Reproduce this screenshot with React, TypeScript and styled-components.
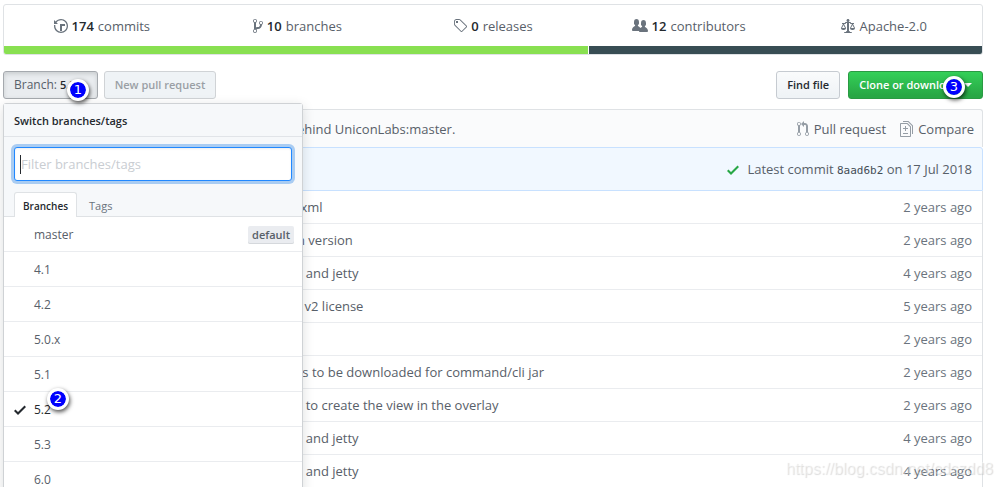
import React from "react";
import styled, { createGlobalStyle, css } from "styled-components";

const GlobalStyle = createGlobalStyle`
  *, *::before, *::after { box-sizing: border-box; }
  body {
    margin: 0;
    background: #fff;
    color: #24292e;
    font: 13px/20px "Open Sans", "Segoe UI", sans-serif;
  }
  button, input { font: inherit; }
`;

const ICONS = {
  history: { w: 14, d: "M8 13H6V6h5v2H8v5zM7 1C4.81 1 2.87 2.02 1.59 3.59L0 2v4h4L2.5 4.5C3.55 3.17 5.17 2.3 7 2.3c3.14 0 5.7 2.56 5.7 5.7s-2.56 5.7-5.7 5.7A5.71 5.71 0 0 1 1.3 8c0-.34.03-.67.09-1H.08C.03 7.33 0 7.66 0 8c0 3.86 3.14 7 7 7s7-3.14 7-7-3.14-7-7-7z" },
  branch: { w: 10, d: "M10 5c0-1.11-.89-2-2-2a1.993 1.993 0 0 0-1 3.72v.3c-.02.52-.23.98-.63 1.38-.4.4-.86.61-1.38.63-.83.02-1.48.16-2 .45V4.72a1.993 1.993 0 0 0-1-3.72C.88 1 0 1.89 0 3a2 2 0 0 0 1 1.72v6.56c-.59.35-1 .99-1 1.72 0 1.11.89 2 2 2 1.11 0 2-.89 2-2 0-.53-.2-1-.53-1.36.09-.06.48-.41.59-.47.25-.11.56-.17.94-.17 1.05-.05 1.95-.45 2.75-1.25S8.95 7.77 9 6.73h-.02C9.59 6.37 10 5.73 10 5zM2 1.8c.66 0 1.2.55 1.2 1.2 0 .65-.55 1.2-1.2 1.2C1.35 4.2.8 3.65.8 3c0-.65.55-1.2 1.2-1.2zm0 12.41c-.66 0-1.2-.55-1.2-1.2 0-.65.55-1.2 1.2-1.2.65 0 1.2.55 1.2 1.2 0 .65-.55 1.2-1.2 1.2zm6-8c-.66 0-1.2-.55-1.2-1.2 0-.65.55-1.2 1.2-1.2.65 0 1.2.55 1.2 1.2 0 .65-.55 1.2-1.2 1.2z" },
  tag: { w: 14, d: "M7.73 1.73C7.26 1.26 6.62 1 5.96 1H3.5C2.13 1 1 2.13 1 3.5v2.47c0 .66.27 1.3.73 1.77l6.06 6.06c.39.39 1.02.39 1.41 0l4.59-4.59a.996.996 0 0 0 0-1.41L7.73 1.73zM2.38 7.09c-.31-.3-.47-.7-.47-1.13V3.5c0-.88.72-1.59 1.59-1.59h2.47c.42 0 .83.16 1.13.47l6.14 6.13-4.73 4.73-6.13-6.15zM3.01 3h2v2H3V3h.01z" },
  people: { w: 16, d: "M16 12.999c0 .439-.45 1-1 1H7.995c-.539 0-.994-.447-.995-.999H1c-.54 0-1-.561-1-1 0-2.634 3-4 3-4s.229-.409 0-1c-.841-.621-1.058-.59-1-3 .058-2.419 1.367-3 2.5-3s2.442.58 2.5 3c.058 2.41-.159 2.379-1 3-.229.59 0 1 0 1s1.549.711 2.42 2.088C9.196 9.369 10 8.999 10 8.999s.229-.409 0-1c-.841-.62-1.058-.59-1-3 .058-2.419 1.367-3 2.5-3s2.437.581 2.495 3c.059 2.41-.158 2.38-1 3-.229.59 0 1 0 1s3.005 1.366 3.005 4z" },
  law: { w: 14, d: "M7 4c-.83 0-1.5-.67-1.5-1.5S6.17 1 7 1s1.5.67 1.5 1.5S7.83 4 7 4zm7 6c0 1.11-.89 2-2 2h-1c-1.11 0-2-.89-2-2l2-4h-1c-.55 0-1-.45-1-1H8v8c.42 0 1 .45 1 1h1c.42 0 1 .45 1 1H3c0-.55.58-1 1-1h1c0-.55.58-1 1-1h.03L6 5H5c0 .55-.45 1-1 1H3l2 4c0 1.11-.89 2-2 2H2c-1.11 0-2-.89-2-2l2-4H1V5h3c0-.55.45-1 1-1h4c.55 0 1 .45 1 1h3v1h-1l2 4zM2.5 7L1 10h3L2.5 7zM13 10l-1.5-3-1.5 3h3z" },
  pull: { w: 12, d: "M11 11.28V5c-.03-.78-.34-1.47-.94-2.06C9.46 2.35 8.78 2.03 8 2H7V0L4 3l3 3V4h1c.27.02.48.11.69.31.21.2.3.42.31.69v6.28A1.993 1.993 0 0 0 10 15a1.993 1.993 0 0 0 1-3.72zm-1 2.92c-.66 0-1.2-.55-1.2-1.2 0-.65.55-1.2 1.2-1.2.65 0 1.2.55 1.2 1.2 0 .65-.55 1.2-1.2 1.2zM4 3c0-1.11-.89-2-2-2a1.993 1.993 0 0 0-1 3.72v6.56A1.993 1.993 0 0 0 2 15a1.993 1.993 0 0 0 1-3.72V4.72c.59-.34 1-.98 1-1.72zm-.8 10c0 .66-.55 1.2-1.2 1.2-.65 0-1.2-.55-1.2-1.2 0-.65.55-1.2 1.2-1.2.65 0 1.2.55 1.2 1.2zM2 4.2C1.34 4.2.8 3.65.8 3c0-.65.55-1.2 1.2-1.2.65 0 1.2.55 1.2 1.2 0 .65-.55 1.2-1.2 1.2z" },
  diff: { w: 13, d: "M6 7h2v1H6v2H5V8H3V7h2V5h1v2zm-3 6h5v-1H3v1zM7.5 2L11 5.5V15c0 .55-.45 1-1 1H1c-.55 0-1-.45-1-1V3c0-.55.45-1 1-1h6.5zM10 6L7 3H1v12h9V6zM8.5 0H3v1h5l4 4v8h1V4.5L8.5 0z" },
  check: { w: 12, d: "M12 5l-8 8-4-4 1.5-1.5L4 10l6.5-6.5L12 5z" },
};

const Svg = styled.svg`
  display: block;
  flex: none;
  fill: currentColor;
`;

function Icon({ name }: { name: keyof typeof ICONS }) {
  const { w, d } = ICONS[name];
  return (
    <Svg width={w} height={16} viewBox={`0 0 ${w} 16`} aria-hidden="true">
      <path fillRule="evenodd" d={d} />
    </Svg>
  );
}

const Page = styled.main`
  position: relative;
  height: 100vh;
  overflow: hidden;
  padding: 4px 19px 0 3px;
`;

const Summary = styled.section`
  border: 1px solid #dfe2e5;
  border-radius: 3px;
  overflow: hidden;
`;

const Stats = styled.ul`
  display: flex;
  margin: 0;
  padding: 0;
  list-style: none;
`;

const Stat = styled.li`
  flex: 1;
`;

const StatLink = styled.a`
  display: flex;
  align-items: center;
  justify-content: center;
  gap: 4px;
  height: 41px;
  color: #586069;
  text-decoration: none;
  svg { color: #6a737d; }
  strong { font-weight: 600; color: #24292e; }
`;

const LanguageBar = styled.div`
  display: flex;
  gap: 1px;
  height: 8px;
`;

const Language = styled.span<{ $share: number; $color: string }>`
  flex: ${(p) => p.$share} 1 0;
  background: ${(p) => p.$color};
`;

const Toolbar = styled.div`
  display: flex;
  gap: 6px;
  margin: 16px 0 10px;
`;

const ToolbarEnd = styled.div`
  display: flex;
  gap: 8px;
  margin-left: auto;
`;

const BranchPicker = styled.div`
  position: relative;
`;

const variants = {
  plain: css`
    color: #24292e;
    border-color: #c6cbd1;
    background: linear-gradient(#fafbfc, #eff3f6 90%);
  `,
  selected: css`
    gap: 3px;
    color: #586069;
    font-size: 12px;
    font-weight: 400;
    border-color: #a5a9ae;
    background: #e9ecef;
    box-shadow: inset 0 2px 4px rgba(27, 31, 35, 0.15);
  `,
  disabled: css`
    color: #9a9fa5;
    border-color: #d0d3d6;
    background: #eff3f6;
  `,
  primary: css`
    color: #fff;
    border-color: #2a9a43;
    background: linear-gradient(#34d058, #28a745 90%);
  `,
};

const Button = styled.button<{ $variant: keyof typeof variants }>`
  display: flex;
  align-items: center;
  gap: 5px;
  height: 28px;
  padding: 0 10px;
  border: 1px solid;
  border-radius: 3px;
  font-size: 11px;
  font-weight: 600;
  line-height: 20px;
  white-space: nowrap;
  ${(p) => variants[p.$variant]}
  strong { color: #24292e; font-size: 11px; font-weight: 600; }
`;

const Caret = styled.span`
  border: 4px solid transparent;
  border-top-color: currentColor;
  border-bottom: 0;
`;

const Popup = styled.div`
  position: absolute;
  z-index: 2;
  top: 32px;
  left: 0;
  width: 300px;
  border: 1px solid #cfd2d5;
  border-radius: 3px;
  background: #fff;
  box-shadow: 0 3px 12px rgba(27, 31, 35, 0.15);
  font-size: 12px;
`;

const PopupTitle = styled.h2`
  margin: 0;
  padding: 9px 10px 7px;
  border-bottom: 1px solid #e1e4e8;
  background: #f6f8fa;
  font-size: 11px;
  font-weight: 600;
  line-height: 16px;
`;

const PopupFilters = styled.div`
  background: #f6f8fa;
`;

const FilterField = styled.div`
  padding: 10px 10px 11px;
`;

const FilterInput = styled.input`
  display: block;
  width: 100%;
  height: 34px;
  padding: 6px;
  border: 1px solid #2188ff;
  border-radius: 3px;
  outline: 0;
  background: #fff;
  color: #24292e;
  box-shadow: inset 0 1px 2px rgba(27, 31, 35, 0.08), 0 0 0 3px #a9ccf2;
  font-size: 13px;
  &::placeholder { color: #c9cdd2; }
  &:placeholder-shown {
    caret-color: transparent;
    background: linear-gradient(#24292e, #24292e) 5px center / 1px 19px no-repeat #fff;
  }
`;

const Tabs = styled.div`
  display: flex;
  height: 25px;
  padding: 0 10px;
  box-shadow: inset 0 -1px 0 #dfe2e5;
`;

const Tab = styled.button<{ $active?: boolean }>`
  height: 25px;
  padding: 2px 8px 0;
  border: 1px solid ${(p) => (p.$active ? "#dfe2e5" : "transparent")};
  border-bottom: 0;
  border-radius: 3px 3px 0 0;
  background: ${(p) => (p.$active ? "#fff" : "transparent")};
  color: ${(p) => (p.$active ? "#24292e" : "#6a737d")};
  font-size: ${(p) => (p.$active ? 10 : 11)}px;
  font-weight: ${(p) => (p.$active ? 600 : 400)};
  & + & { margin-left: 3px; }
`;

const BranchList = styled.ul`
  margin: 0;
  padding: 0;
  list-style: none;
`;

const BranchItem = styled.li`
  border-bottom: 1px solid #eaecef;
`;

const BranchLink = styled.a<{ $current?: boolean }>`
  display: grid;
  grid-template-columns: 12px 1fr auto;
  align-items: center;
  gap: 8px;
  height: 34px;
  padding: 1px 8px 0 10px;
  color: ${(p) => (p.$current ? "#24292e" : "#586069")};
  text-decoration: none;
`;

const DefaultLabel = styled.span`
  padding: 0 4px;
  border-radius: 2px;
  background: #eaecf0;
  box-shadow: inset 0 -1px 0 #d5d8dc;
  color: #586069;
  font-size: 11px;
  font-weight: 600;
  line-height: 18px;
`;

const CompareBar = styled.div`
  display: flex;
  align-items: center;
  gap: 14px;
  height: 38px;
  padding: 1px 8px 0 293px;
  border: 1px solid #dfe2e5;
  border-bottom: 0;
  border-radius: 3px 3px 0 0;
  background: #fafbfc;
  color: #586069;
`;

const CompareText = styled.span`
  flex: 1;
`;

const CompareLink = styled.a`
  display: flex;
  align-items: center;
  gap: 5px;
  color: #586069;
  text-decoration: none;
  svg { color: #959da5; }
`;

const CommitBar = styled.div`
  display: flex;
  align-items: center;
  justify-content: flex-end;
  gap: 8px;
  height: 44px;
  padding: 1px 10px 0;
  border: 1px solid #c8e1ff;
  border-radius: 3px 3px 0 0;
  background: #f1f8ff;
  color: #586069;
  svg { color: #28a745; }
`;

const Sha = styled.a`
  color: #444d56;
  font: 11px/20px "DejaVu Sans Mono", monospace;
  text-decoration: none;
`;

const FileTable = styled.table`
  width: 100%;
  border: 1px solid #dfe2e5;
  border-top: 0;
  border-spacing: 0;
  table-layout: fixed;
  td { border-bottom: 1px solid #eaecef; }
`;

const NameCell = styled.td`
  width: 293px;
`;

const MessageCell = styled.td`
  height: 33px;
  padding: 0;
  color: #586069;
`;

const AgeCell = styled.td`
  width: 120px;
  padding: 0 10px 0 0;
  color: #6a737d;
  text-align: right;
`;

const Marker = styled.span<{ $x: number; $y: number }>`
  position: absolute;
  z-index: 3;
  left: ${(p) => p.$x}px;
  top: ${(p) => p.$y}px;
  width: 22px;
  height: 22px;
  border: 3px solid #fff;
  border-radius: 50%;
  background: #0000fe;
  background-clip: padding-box;
  box-shadow: 1px 2px 4px rgba(0, 0, 0, 0.7);
  color: #fff;
  font: 13px/16px "DejaVu Sans", sans-serif;
  text-align: center;
`;

const Watermark = styled.span`
  position: absolute;
  right: 9px;
  bottom: 8px;
  color: rgba(255, 255, 255, 0.4);
  font: 16px/20px "Liberation Sans", Arial, sans-serif;
  text-shadow: 1px 1px 1px rgba(0, 0, 0, 0.14);
`;

const branches = ["master", "4.1", "4.2", "5.0.x", "5.1", "5.2", "5.3", "6.0"];

const files = [
  [".xml", "2 years ago"],
  ["n version", "2 years ago"],
  ["r and jetty", "4 years ago"],
  ["- v2 license", "5 years ago"],
  ["", "2 years ago"],
  ["rs to be downloaded for command/cli jar", "2 years ago"],
  ["r to create the view in the overlay", "2 years ago"],
  ["r and jetty", "4 years ago"],
  ["r and jetty", "4 years ago"],
];

const stats: { icon: keyof typeof ICONS; count?: string; label: string }[] = [
  { icon: "history", count: "174", label: "commits" },
  { icon: "branch", count: "10", label: "branches" },
  { icon: "tag", count: "0", label: "releases" },
  { icon: "people", count: "12", label: "contributors" },
  { icon: "law", label: "Apache-2.0" },
];

export default function App() {
  return (
    <Page>
      <GlobalStyle />
      <Summary>
        <Stats>
          {stats.map((s) => (
            <Stat key={s.label}>
              <StatLink href="#">
                <Icon name={s.icon} />
                {s.count && <strong>{s.count}</strong>}
                <span>{s.label}</span>
              </StatLink>
            </Stat>
          ))}
        </Stats>
        <LanguageBar>
          <Language $share={598} $color="#89e051" />
          <Language $share={402} $color="#384d54" />
        </LanguageBar>
      </Summary>

      <Toolbar>
        <BranchPicker>
          <Button $variant="selected" type="button" aria-expanded="true">
            <span>Branch: <strong>5.2</strong></span>
            <Caret />
          </Button>
          <Popup>
            <PopupTitle>Switch branches/tags</PopupTitle>
            <PopupFilters>
              <FilterField>
                <FilterInput type="text" aria-label="Filter branches/tags" placeholder="Filter branches/tags" autoFocus />
              </FilterField>
              <Tabs role="tablist">
                <Tab $active type="button" role="tab" aria-selected="true">Branches</Tab>
                <Tab type="button" role="tab" aria-selected="false">Tags</Tab>
              </Tabs>
            </PopupFilters>
            <BranchList>
              {branches.map((b) => (
                <BranchItem key={b}>
                  <BranchLink href="#" $current={b === "5.2"}>
                    {b === "5.2" ? <Icon name="check" /> : <span />}
                    <span>{b}</span>
                    {b === "master" && <DefaultLabel>default</DefaultLabel>}
                  </BranchLink>
                </BranchItem>
              ))}
            </BranchList>
          </Popup>
        </BranchPicker>
        <Button $variant="disabled" type="button" disabled>New pull request</Button>
        <ToolbarEnd>
          <Button $variant="plain" type="button">Find file</Button>
          <Button $variant="primary" type="button">Clone or download<Caret /></Button>
        </ToolbarEnd>
      </Toolbar>

      <CompareBar>
        <CompareText>ehind UniconLabs:master.</CompareText>
        <CompareLink href="#"><Icon name="pull" />Pull request</CompareLink>
        <CompareLink href="#"><Icon name="diff" />Compare</CompareLink>
      </CompareBar>
      <CommitBar>
        <Icon name="check" />
        <span>Latest commit <Sha href="#">8aad6b2</Sha> on 17 Jul 2018</span>
      </CommitBar>
      <FileTable>
        <tbody>
          {files.map(([message, age], i) => (
            <tr key={i}>
              <NameCell />
              <MessageCell>{message}</MessageCell>
              <AgeCell>{age}</AgeCell>
            </tr>
          ))}
        </tbody>
      </FileTable>

      <Marker $x={67} $y={79}>1</Marker>
      <Marker $x={47} $y={388}>2</Marker>
      <Marker $x={943} $y={76}>3</Marker>
      <Watermark>https://blog.csdn.net/cdszdd8</Watermark>
    </Page>
  );
}
